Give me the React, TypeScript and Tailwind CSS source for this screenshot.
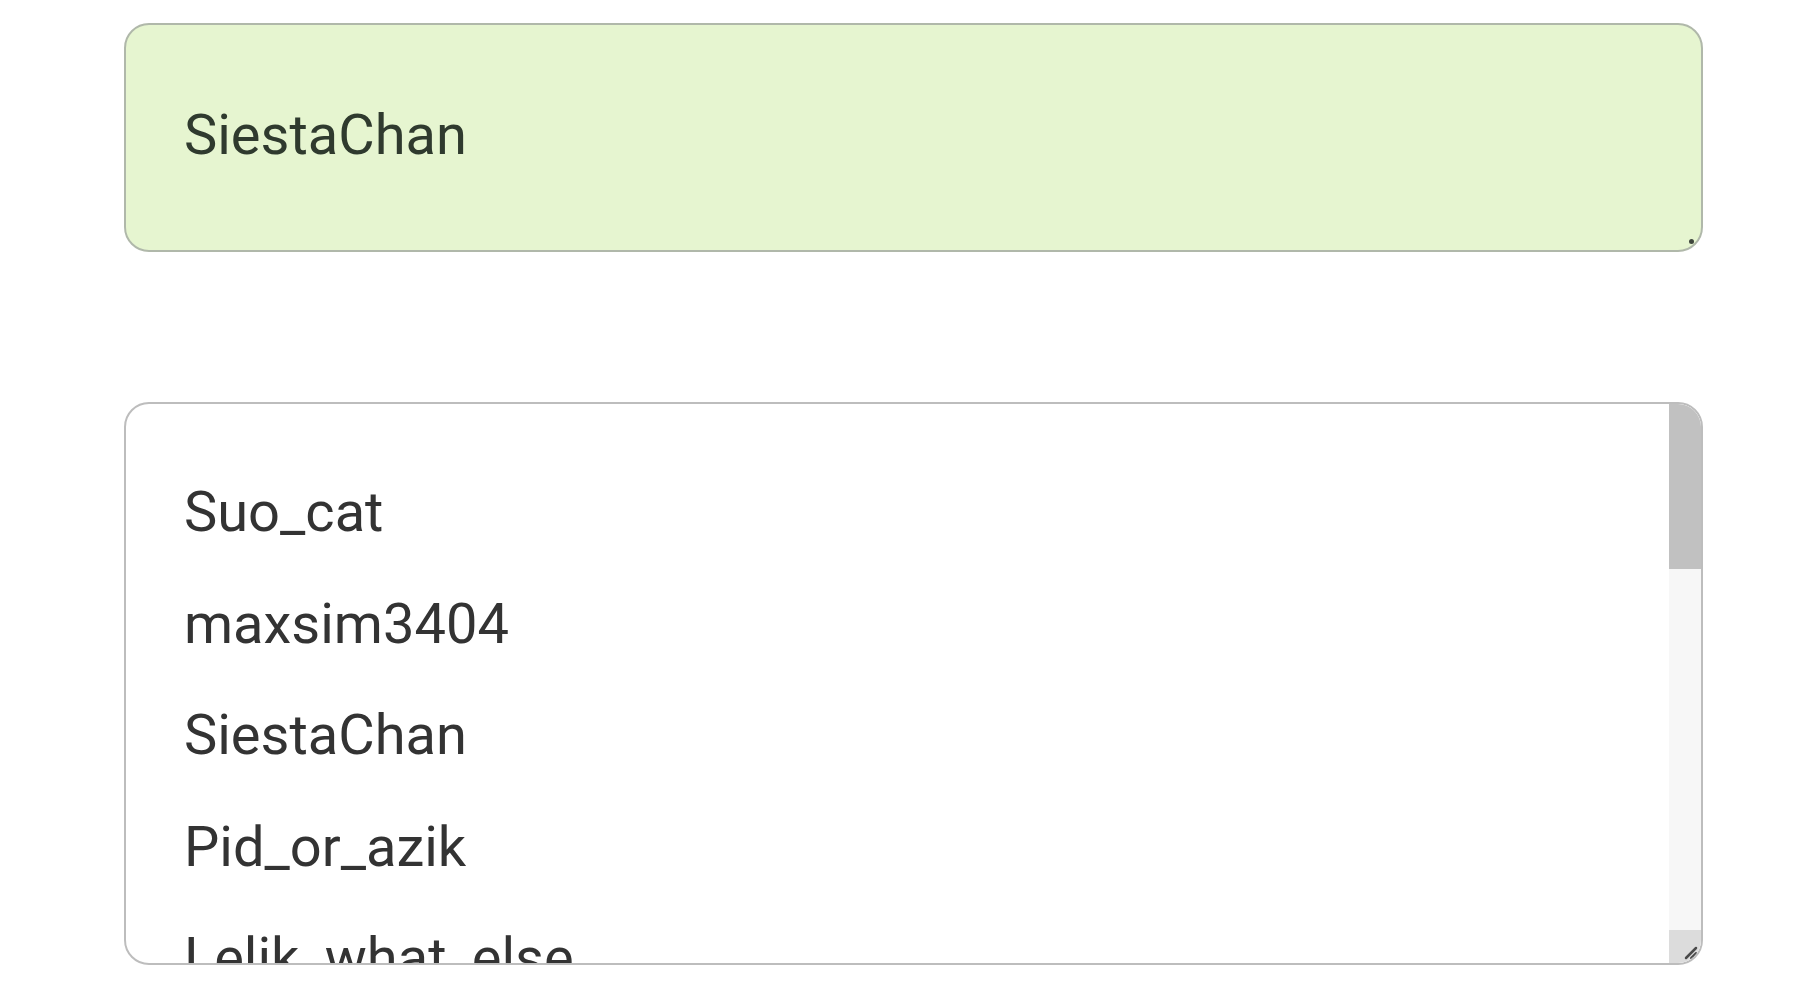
import React from "react";

const players = ["Suo_cat", "maxsim3404", "SiestaChan", "Pid_or_azik", "Lelik_what_else"];

const App: React.FC = () => {
  return (
    <div className="min-h-screen w-[1820px] bg-white pt-[23px] pl-[124px] font-['Roboto',sans-serif]">
      {/* selected player */}
      <div className="relative flex h-[229px] w-[1579px] items-center rounded-[25px] border-2 border-[#b0b8aa] bg-[#e6f5d0] pb-[4px] pl-[58px]">
        <span className="text-[56px] leading-[111px] text-[#2f3a2e]">SiestaChan</span>
        <span className="absolute bottom-[6px] right-[7px] h-[5px] w-[5px] rounded-full bg-[#3f463d]" />
      </div>

      {/* players list */}
      <div className="mt-[150px] flex h-[563px] w-[1579px] overflow-hidden rounded-[25px] border-2 border-[#bdbdbd] bg-white">
        <ul className="flex-1 overflow-hidden pl-[58px] pt-[53px]">
          {players.map((name) => (
            <li key={name} className="text-[56px] leading-[111.6px] text-[#333333]">
              {name}
            </li>
          ))}
        </ul>
        <div className="flex w-[32px] flex-col bg-[#f7f7f7]">
          <div className="h-[165px] bg-[#c1c1c1]" />
          <div className="flex-1" />
          <div className="flex h-[33px] items-end justify-end bg-[#dcdcdc] p-[3px]">
            <svg width="14" height="14" viewBox="0 0 14 14">
              <path d="M2 12 L12 2" stroke="#4a4a4a" strokeWidth="2.5" strokeLinecap="round" />
              <path d="M7 12 L12 7" stroke="#4a4a4a" strokeWidth="2" strokeLinecap="round" />
            </svg>
          </div>
        </div>
      </div>
    </div>
  );
};

export default App;
